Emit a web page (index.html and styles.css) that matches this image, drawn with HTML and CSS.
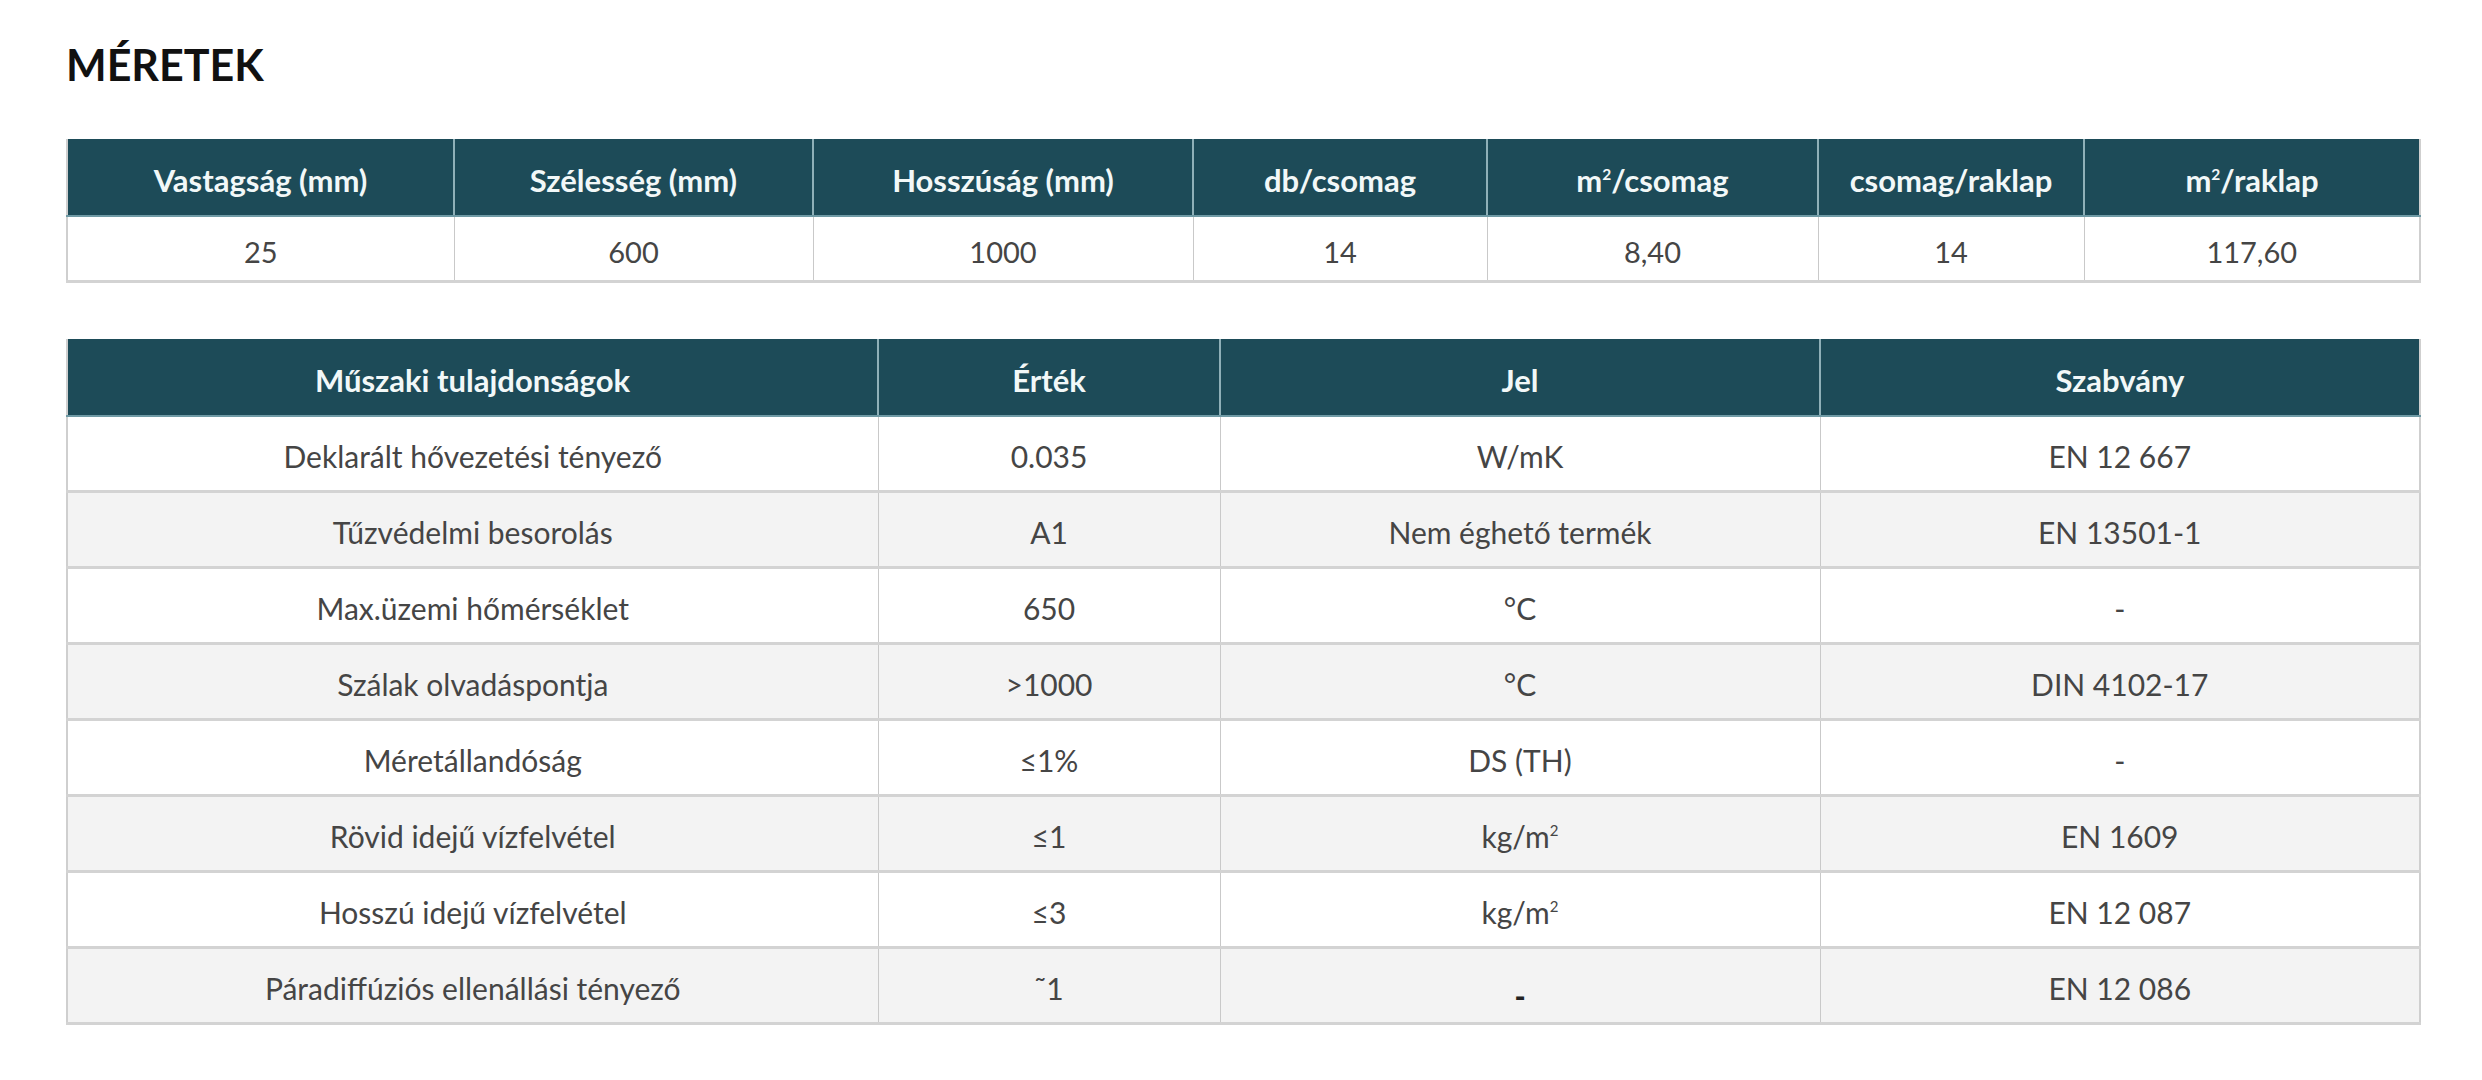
FILE: index.html
```html
<!DOCTYPE html>
<html lang="hu">
<head>
<meta charset="utf-8">
<title>Méretek</title>
<link rel="stylesheet" href="styles.css">
</head>
<body>
<main class="page">
  <h2 class="title">MÉRETEK</h2>

  <table class="tbl tbl-dim">
    <colgroup>
      <col class="c1"><col class="c2"><col class="c3"><col class="c4"><col class="c5"><col class="c6"><col class="c7">
    </colgroup>
    <thead>
      <tr>
        <th>Vastagság (mm)</th>
        <th>Szélesség (mm)</th>
        <th>Hosszúság (mm)</th>
        <th>db/csomag</th>
        <th>m<sup>2</sup>/csomag</th>
        <th>csomag/raklap</th>
        <th>m<sup>2</sup>/raklap</th>
      </tr>
    </thead>
    <tbody>
      <tr>
        <td>25</td><td>600</td><td>1000</td><td>14</td><td>8,40</td><td>14</td><td>117,60</td>
      </tr>
    </tbody>
  </table>

  <table class="tbl tbl-tech">
    <colgroup>
      <col class="t1"><col class="t2"><col class="t3"><col class="t4">
    </colgroup>
    <thead>
      <tr>
        <th>Műszaki tulajdonságok</th>
        <th>Érték</th>
        <th>Jel</th>
        <th>Szabvány</th>
      </tr>
    </thead>
    <tbody>
      <tr><td>Deklarált hővezetési tényező</td><td>0.035</td><td>W/mK</td><td>EN 12 667</td></tr>
      <tr><td>Tűzvédelmi besorolás</td><td>A1</td><td>Nem éghető termék</td><td>EN 13501-1</td></tr>
      <tr><td>Max.üzemi hőmérséklet</td><td>650</td><td>°C</td><td>-</td></tr>
      <tr><td>Szálak olvadáspontja</td><td>&gt;1000</td><td>°C</td><td>DIN 4102-17</td></tr>
      <tr><td>Méretállandóság</td><td>≤1%</td><td>DS (TH)</td><td>-</td></tr>
      <tr><td>Rövid idejű vízfelvétel</td><td>≤1</td><td>kg/m<sup>2</sup></td><td>EN 1609</td></tr>
      <tr><td>Hosszú idejű vízfelvétel</td><td>≤3</td><td>kg/m<sup>2</sup></td><td>EN 12 087</td></tr>
      <tr><td>Páradiffúziós ellenállási tényező</td><td>˜1</td><td><span class="low-dash">-</span></td><td>EN 12 086</td></tr>
    </tbody>
  </table>
</main>
</body>
</html>
```

FILE: styles.css
```css
html, body {
  margin: 0;
  padding: 0;
  background: #ffffff;
}

body {
  font-family: "Lato", "Liberation Sans", sans-serif;
  color: #3d3d3d;
}

.page {
  padding: 40px 0 0 66px;
  width: 2353px;
}

.title {
  margin: 0;
  font-size: 43px;
  line-height: 50px;
  font-weight: 700;
  color: #111111;
  letter-spacing: 0;
}

.tbl {
  width: 2353px;
  table-layout: fixed;
  border-collapse: collapse;
  border-left: 2px solid #cfcfcf;
  border-right: 2px solid #cfcfcf;
}

.tbl-dim {
  margin-top: 49px;
}

.tbl-tech {
  margin-top: 56px;
}

.tbl th {
  background: #1d4b58;
  color: #f2f8f8;
  font-weight: 700;
  font-size: 31px;
  height: 71px;
  padding: 5px 8px 0;
  text-align: center;
  vertical-align: middle;
  border-left: 2px solid #8fb0b8;
  border-bottom: 2px solid #6f9aa5;
}

.tbl th:first-child {
  border-left: none;
}

.tbl td {
  text-align: center;
  vertical-align: middle;
  font-size: 30px;
  font-weight: 400;
  color: #454545;
  padding: 5px 8px 0;
  border-left: 1px solid #c9c9c9;
  border-bottom: 3px solid #d3d3d3;
}

.tbl td:first-child {
  border-left: none;
}

.tbl-dim td {
  height: 58px;
  font-size: 29px;
}

.tbl-tech td {
  height: 68px;
}

.tbl-tech tbody tr:nth-child(even) td {
  background: #f3f3f3;
}

.tbl sup {
  font-size: 0.5em;
  line-height: 0;
  vertical-align: 0.8em;
}

.low-dash {
  position: relative;
  top: 8px;
  font-weight: 900;
  color: #222;
}

.c1 { width: 387px; }
.c2 { width: 359px; }
.c3 { width: 380px; }
.c4 { width: 294px; }
.c5 { width: 331px; }
.c6 { width: 266px; }
.c7 { width: 336px; }

.t1 { width: 811px; }
.t2 { width: 342px; }
.t3 { width: 600px; }
.t4 { width: 600px; }
```
